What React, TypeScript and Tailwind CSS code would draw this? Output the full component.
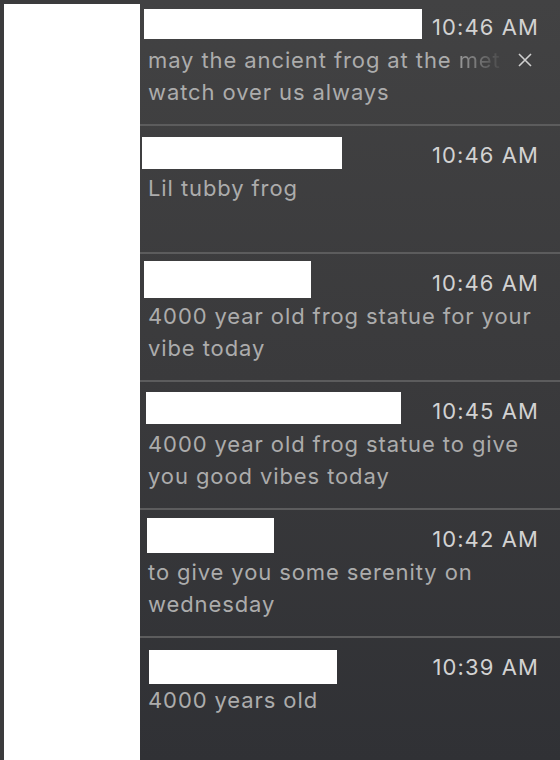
import React from 'react'

type Note = {
  box: string
  time: string
  lines: React.ReactNode[]
  close?: boolean
}

const notes: Note[] = [
  {
    box: 'ml-[4px] mt-[11px] w-[278px] h-[30px]',
    time: '10:46 AM',
    lines: [
      <>
        may the ancient frog at the{' '}
        <span className="bg-gradient-to-r from-[#9a9a9a] to-[#4a4a4b] bg-clip-text text-transparent">met</span>
      </>,
      'watch over us always',
    ],
    close: true,
  },
  { box: 'ml-[2px] mt-[11px] w-[200px] h-[32px]', time: '10:46 AM', lines: ['Lil tubby frog'] },
  {
    box: 'ml-[4px] mt-[7px] w-[167px] h-[37px]',
    time: '10:46 AM',
    lines: ['4000 year old frog statue for your', 'vibe today'],
  },
  {
    box: 'ml-[6px] mt-[10px] w-[255px] h-[32px]',
    time: '10:45 AM',
    lines: ['4000 year old frog statue to give', 'you good vibes today'],
  },
  {
    box: 'ml-[7px] mt-[8px] w-[127px] h-[35px]',
    time: '10:42 AM',
    lines: ['to give you some serenity on', 'wednesday'],
  },
  { box: 'ml-[9px] mt-[12px] w-[188px] h-[34px]', time: '10:39 AM', lines: ['4000 years old'] },
]

export default function App() {
  return (
    <div
      className="flex h-[760px] w-[560px] overflow-hidden bg-[#3b3b3d]"
      style={{ fontFamily: 'Inter, "Noto Sans", sans-serif' }}
    >
      {/* redacted sidebar */}
      <div className="pl-[4px] pt-[4px]">
        <div className="h-full w-[136px] bg-white"></div>
      </div>

      {/* notification list */}
      <div className="flex-1 bg-gradient-to-b from-[#424243] via-[#3a3a3c] to-[#303135]">
        <div className="-mt-[2px]">
          {notes.map((n, i) => (
            <div key={i} className="relative h-[128px] border-b-2 border-[#5c5c5d]">
              <div className="flex h-[46px] items-start justify-between pr-[21px]">
                <div className={'shrink-0 bg-white ' + n.box}></div>
                <span className="mt-[13px] text-[22px] leading-[32px] tracking-[1.1px] text-[#d2d2d2]">{n.time}</span>
              </div>
              <div className="pl-[8px] text-[22px] leading-[32px] tracking-[0.9px] text-[#acacac]">
                {n.lines.map((l, j) => (
                  <div key={j} className="whitespace-nowrap">{l}</div>
                ))}
              </div>
              {n.close && (
                <svg
                  className="absolute right-[28px] top-[55px]"
                  width="14"
                  height="14"
                  viewBox="0 0 14 14"
                  fill="none"
                  stroke="#cfcfcf"
                  strokeWidth="1.6"
                >
                  <path d="M1 1 L13 13 M13 1 L1 13" />
                </svg>
              )}
            </div>
          ))}
        </div>
      </div>
    </div>
  )
}
